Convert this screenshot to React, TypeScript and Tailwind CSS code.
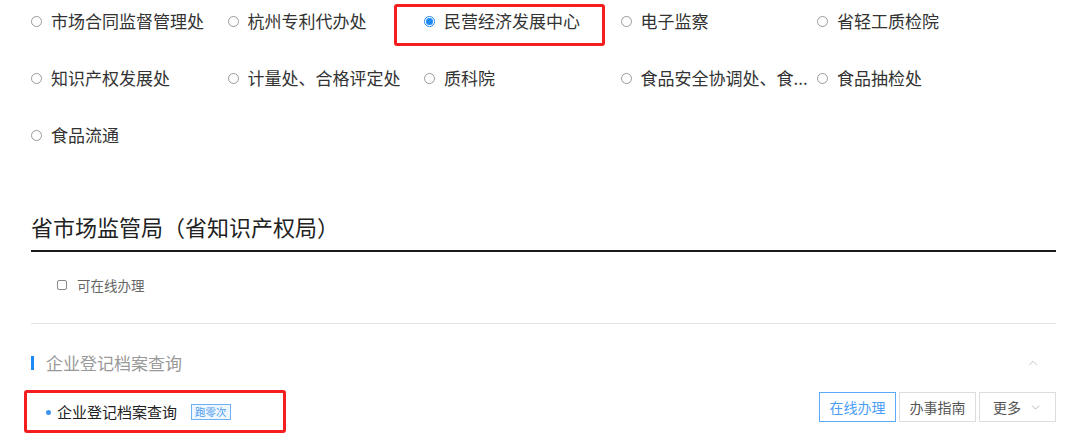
import { ChevronDown, ChevronUp } from 'lucide-react';

const offices = [
  '市场合同监督管理处',
  '杭州专利代办处',
  '民营经济发展中心',
  '电子监察',
  '省轻工质检院',
  '知识产权发展处',
  '计量处、合格评定处',
  '质科院',
  '食品安全协调处、食...',
  '食品抽检处',
  '食品流通',
];

const selected = '民营经济发展中心';

function Radio({ checked }: { checked: boolean }) {
  if (checked) {
    return (
      <span className="flex h-[11px] w-[11px] shrink-0 items-center justify-center rounded-full border border-[#1e88f5]">
        <span className="h-[7px] w-[7px] rounded-full bg-[#1e88f5]" />
      </span>
    );
  }
  return <span className="h-[11px] w-[11px] shrink-0 rounded-full border border-[#9a9a9a]" />;
}

export default function App() {
  return (
    <div
      className="relative h-[441px] w-[1080px] overflow-hidden bg-white text-[#333]"
      style={{ fontFamily: '"Noto Sans CJK SC", "Noto Sans", sans-serif' }}
    >
      <div className="w-[1056px] pl-[31px]">
        {/* office filter */}
        <div className="grid grid-cols-[repeat(5,196.5px)] gap-y-[15px]">
          {offices.map((name) => (
            <label key={name} className="flex h-[42px] items-center gap-[9px]">
              <Radio checked={name === selected} />
              <span className="whitespace-nowrap text-[17px] leading-[42px]">{name}</span>
            </label>
          ))}
        </div>

        {/* department header */}
        <h2 className="mt-[49px] border-b-2 border-[#1a1a1a] pb-[3px] text-[22px] leading-[42px] text-[#222]">
          省市场监管局（省知识产权局）
        </h2>

        <div className="flex h-[72px] items-start border-b border-[#e3e3e3] pl-[26px] pt-[22px]">
          <label className="flex h-[22px] items-center gap-[10px] text-[13.5px] text-[#666]">
            <span className="h-[10px] w-[10px] rounded-[2px] border border-[#888]" />
            可在线办理
          </label>
        </div>

        {/* category */}
        <div className="mt-[25px] flex h-[28px] items-center">
          <span className="h-[14px] w-[3px] bg-[#1e88f5]" />
          <span className="ml-[12px] text-[17px] text-[#999]">企业登记档案查询</span>
          <ChevronUp className="ml-auto mr-[16px] h-[14px] w-[14px] text-[#bbb]" strokeWidth={1.5} />
        </div>

        <div className="mt-[15px] flex items-start">
          <div className="mt-[10px] flex h-[20px] items-center pl-[15px]">
            <span className="h-[5px] w-[5px] rounded-full bg-[#3c95f0]" />
            <span className="ml-[6px] text-[15px] text-[#222]">企业登记档案查询</span>
            <span className="ml-[14px] flex h-[16px] items-center border border-[#6cb2f5] bg-[#eef6fe] px-[3px] text-[10.5px] text-[#4b9cf0]">
              跑零次
            </span>
          </div>
          <div className="ml-auto flex gap-[3px]">
            <button className="h-[30px] w-[77px] border border-[#5aaaf5] text-[14px] text-[#4a9ef5]">在线办理</button>
            <button className="h-[30px] w-[77px] border border-[#ddd] text-[14px] text-[#555]">办事指南</button>
            <button className="flex h-[30px] w-[77px] items-center justify-center gap-[8px] border border-[#ddd] text-[14px] text-[#555]">
              更多
              <ChevronDown className="h-[13px] w-[13px] text-[#aaa]" strokeWidth={1.5} />
            </button>
          </div>
        </div>
      </div>

      {/* annotation highlights */}
      <div className="pointer-events-none absolute left-[394px] top-[4px] h-[42px] w-[211px] rounded-[3px] border-[3px] border-[#f51d1d]" />
      <div className="pointer-events-none absolute left-[24px] top-[390px] h-[43px] w-[262px] rounded-[3px] border-[3px] border-[#f51d1d]" />
    </div>
  );
}
